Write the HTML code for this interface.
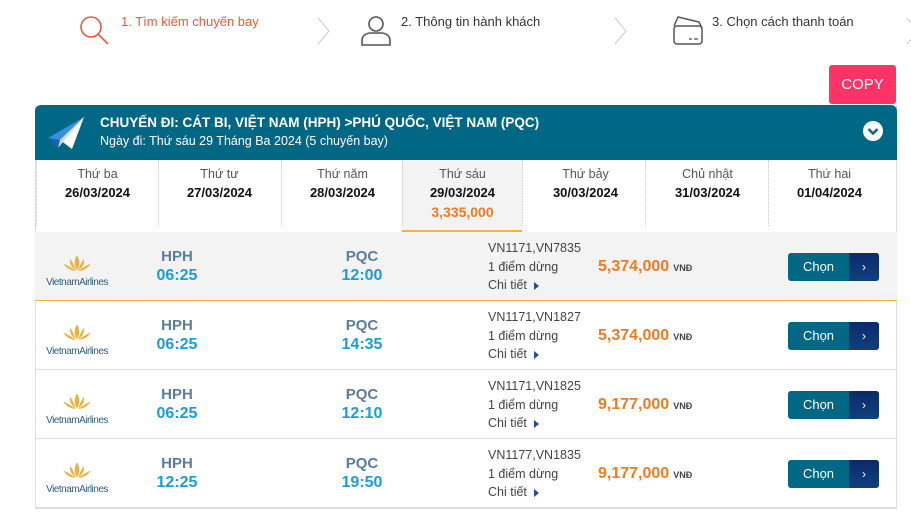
<!DOCTYPE html>
<html><head><meta charset="utf-8"><style>
*{margin:0;padding:0;box-sizing:border-box}
body{width:911px;height:523px;background:#fff;font-family:"Liberation Sans",Arial,sans-serif;position:relative;overflow:hidden;color:#333}
.a{position:absolute}
.step{font-size:13px;color:#333}
.card{left:35px;top:105px;width:862px;height:404px;border:1px solid #ddd;border-top:none}
.hdr{left:35px;top:105px;width:862px;height:55px;background:#006884;border-radius:6px 6px 0 0}
.dc{position:absolute;top:160px;width:123px;height:72px;text-align:center}
.dc .d{font-size:12.5px;color:#555;margin-top:7px}
.dc .t{font-size:13px;font-weight:bold;color:#111;margin-top:4px}
.sep{position:absolute;top:160px;height:66px;border-left:1px dotted #ccc}
.row{position:absolute;left:35px;width:862px;height:69px;border-bottom:1px solid #ddd}
.code{position:absolute;width:80px;text-align:center;font-size:15px;font-weight:bold;color:#5b7da0}
.tm{position:absolute;width:80px;text-align:center;font-size:16px;font-weight:bold;color:#1a9ce0}
.info{position:absolute;left:453px;font-size:12.5px;color:#444;line-height:18.5px}
.pr{position:absolute;left:563px;font-size:16px;font-weight:bold;color:#f47920}
.pr span{font-size:9px;color:#444;margin-left:4px}
.btn{position:absolute;left:753px;width:91px;height:28px;border-radius:3px;overflow:hidden;background:#006884}
.btn b{position:absolute;left:0;width:61px;top:6px;text-align:center;color:#fff;font-weight:normal;font-size:13px}
.btn i{position:absolute;left:61px;top:0;width:30px;height:28px;background:linear-gradient(#0b2a6a,#10407f);color:#fff;font-style:normal;text-align:center;line-height:28px;font-size:12px}
.logo{position:absolute;left:5px;width:74px;text-align:center;line-height:1}
.logo span{display:block;font-size:10px;color:#2d5f7a;letter-spacing:-0.5px;margin-top:1px}
.tri{display:inline-block;width:0;height:0;border-left:5px solid #234f8e;border-top:4.5px solid transparent;border-bottom:4.5px solid transparent;margin-left:7px;vertical-align:middle}
</style></head><body>
<svg class="a" style="left:78px;top:14px" width="34" height="32" viewBox="0 0 34 32"><circle cx="13" cy="13" r="10" fill="none" stroke="#e85a3d" stroke-width="1.6"/><line x1="20" y1="20" x2="30" y2="30" stroke="#e85a3d" stroke-width="1.6"/></svg>
<div class="a step" style="left:121px;top:14px;color:#f05a28">1. Tìm kiếm chuyến bay</div>
<svg class="a" style="left:316px;top:16px" width="16" height="30"><polyline points="2,2 13,15 2,28" fill="none" stroke="#ccc" stroke-width="1"/></svg>
<svg class="a" style="left:360px;top:14px" width="32" height="32" viewBox="0 0 32 32"><circle cx="16" cy="10" r="7" fill="none" stroke="#555" stroke-width="1.6"/><path d="M2 31 V27 Q2 20 10 19 H22 Q30 20 30 27 V31 Z" fill="none" stroke="#555" stroke-width="1.6"/></svg>
<div class="a step" style="left:401px;top:14px">2. Thông tin hành khách</div>
<svg class="a" style="left:613px;top:16px" width="16" height="30"><polyline points="2,2 13,15 2,28" fill="none" stroke="#ccc" stroke-width="1"/></svg>
<svg class="a" style="left:672px;top:14px" width="32" height="32" viewBox="0 0 32 32"><path d="M2 12 L6 3 L27 8 L30 14" fill="none" stroke="#555" stroke-width="1.5"/><rect x="2" y="12" width="28" height="18" rx="3" fill="#fff" stroke="#555" stroke-width="1.5"/><line x1="17" y1="25" x2="20" y2="25" stroke="#555" stroke-width="1.3"/><line x1="22" y1="25" x2="26" y2="25" stroke="#555" stroke-width="1.3"/></svg>
<div class="a step" style="left:712px;top:14px">3. Chọn cách thanh toán</div>
<svg class="a" style="left:905px;top:16px" width="10" height="30"><polyline points="2,2 13,15 2,28" fill="none" stroke="#ccc" stroke-width="1"/></svg>
<div class="a" style="left:829px;top:65px;width:67px;height:39px;background:#ff3366;border-radius:3px;color:#fff;font-size:15px;text-align:center;line-height:39px">COPY</div>

<div class="a card"></div>
<div class="a hdr"></div>
<svg class="a" style="left:46px;top:116px" width="40" height="34" viewBox="0 0 40 34"><polygon points="38,1 2,22 14,24" fill="#3a8ee0"/><polygon points="38,1 14,24 26,33" fill="#fff"/><polygon points="38,1 14,24 12,32" fill="#cde"/><polygon points="2,22 14,24 12,32" fill="#1d63b5"/></svg>
<div class="a" style="left:100px;top:115px;color:#fff;font-size:13.5px;font-weight:bold">CHUYẾN ĐI: CÁT BI, VIỆT NAM (HPH) &gt;PHÚ QUỐC, VIỆT NAM (PQC)</div>
<div class="a" style="left:100px;top:134px;color:#fff;font-size:12.5px">Ngày đi: Thứ sáu 29 Tháng Ba 2024 (5 chuyến bay)</div>
<svg class="a" style="left:862px;top:120px" width="22" height="22"><circle cx="11" cy="11" r="10" fill="#fff"/><polyline points="6.5,9 11,13.5 15.5,9" fill="none" stroke="#006884" stroke-width="2.4"/></svg>

<div class="a" style="left:402px;top:160px;width:120px;height:72px;background:#f3f3f3;border-bottom:2px solid #f0b43c"></div>
<div class="dc" style="left:36px"><div class="d">Thứ ba</div><div class="t">26/03/2024</div></div>
<div class="dc" style="left:158px"><div class="d">Thứ tư</div><div class="t">27/03/2024</div></div>
<div class="dc" style="left:281px"><div class="d">Thứ năm</div><div class="t">28/03/2024</div></div>
<div class="dc" style="left:401px"><div class="d">Thứ sáu</div><div class="t">29/03/2024</div><div style="color:#f47920;font-weight:bold;font-size:14px;margin-top:4px">3,335,000</div></div>
<div class="dc" style="left:524px"><div class="d">Thứ bảy</div><div class="t">30/03/2024</div></div>
<div class="dc" style="left:646px"><div class="d">Chủ nhật</div><div class="t">31/03/2024</div></div>
<div class="dc" style="left:768px"><div class="d">Thứ hai</div><div class="t">01/04/2024</div></div>
<div class="sep" style="left:36px"></div><div class="sep" style="left:158px"></div><div class="sep" style="left:281px"></div><div class="sep" style="left:402px"></div><div class="sep" style="left:522px"></div><div class="sep" style="left:645px"></div><div class="sep" style="left:768px"></div>
<div class="a" style="left:35px;top:232px;width:862px;border-top:1px solid #ddd"></div>

<div class="row" style="top:232px;background:#f3f3f3;border-bottom:1px solid #f0b43c">
<div class="logo" style="top:22px"><svg width="30" height="19" viewBox="0 0 26 14"><path d="M13 0 Q9 6 13 13 Q17 6 13 0Z M7 3 Q6 9 12 13 Q10 7 7 3Z M19 3 Q20 9 14 13 Q16 7 19 3Z M1 7 Q5 13 12 13.5 Q6 9 1 7Z M25 7 Q21 13 14 13.5 Q20 9 25 7Z" fill="#e9b23c"/></svg><span>VietnamAirlines</span></div>
<div class="code" style="left:102px;top:16px">HPH</div><div class="tm" style="left:102px;top:35px">06:25</div>
<div class="code" style="left:287px;top:16px">PQC</div><div class="tm" style="left:287px;top:35px">12:00</div>
<div class="info" style="top:7px">VN1171,VN7835<br>1 điểm dừng<br>Chi tiết<span class="tri"></span></div>
<div class="pr" style="top:26px">5,374,000<span>VNĐ</span></div>
<div class="btn" style="top:21px"><b>Chọn</b><i>›</i></div>
</div>
<div class="row" style="top:301px">
<div class="logo" style="top:22px"><svg width="30" height="19" viewBox="0 0 26 14"><path d="M13 0 Q9 6 13 13 Q17 6 13 0Z M7 3 Q6 9 12 13 Q10 7 7 3Z M19 3 Q20 9 14 13 Q16 7 19 3Z M1 7 Q5 13 12 13.5 Q6 9 1 7Z M25 7 Q21 13 14 13.5 Q20 9 25 7Z" fill="#e9b23c"/></svg><span>VietnamAirlines</span></div>
<div class="code" style="left:102px;top:16px">HPH</div><div class="tm" style="left:102px;top:35px">06:25</div>
<div class="code" style="left:287px;top:16px">PQC</div><div class="tm" style="left:287px;top:35px">14:35</div>
<div class="info" style="top:7px">VN1171,VN1827<br>1 điểm dừng<br>Chi tiết<span class="tri"></span></div>
<div class="pr" style="top:26px">5,374,000<span>VNĐ</span></div>
<div class="btn" style="top:21px"><b>Chọn</b><i>›</i></div>
</div>
<div class="row" style="top:370px">
<div class="logo" style="top:22px"><svg width="30" height="19" viewBox="0 0 26 14"><path d="M13 0 Q9 6 13 13 Q17 6 13 0Z M7 3 Q6 9 12 13 Q10 7 7 3Z M19 3 Q20 9 14 13 Q16 7 19 3Z M1 7 Q5 13 12 13.5 Q6 9 1 7Z M25 7 Q21 13 14 13.5 Q20 9 25 7Z" fill="#e9b23c"/></svg><span>VietnamAirlines</span></div>
<div class="code" style="left:102px;top:16px">HPH</div><div class="tm" style="left:102px;top:35px">06:25</div>
<div class="code" style="left:287px;top:16px">PQC</div><div class="tm" style="left:287px;top:35px">12:10</div>
<div class="info" style="top:7px">VN1171,VN1825<br>1 điểm dừng<br>Chi tiết<span class="tri"></span></div>
<div class="pr" style="top:26px">9,177,000<span>VNĐ</span></div>
<div class="btn" style="top:21px"><b>Chọn</b><i>›</i></div>
</div>
<div class="row" style="top:439px">
<div class="logo" style="top:22px"><svg width="30" height="19" viewBox="0 0 26 14"><path d="M13 0 Q9 6 13 13 Q17 6 13 0Z M7 3 Q6 9 12 13 Q10 7 7 3Z M19 3 Q20 9 14 13 Q16 7 19 3Z M1 7 Q5 13 12 13.5 Q6 9 1 7Z M25 7 Q21 13 14 13.5 Q20 9 25 7Z" fill="#e9b23c"/></svg><span>VietnamAirlines</span></div>
<div class="code" style="left:102px;top:16px">HPH</div><div class="tm" style="left:102px;top:35px">12:25</div>
<div class="code" style="left:287px;top:16px">PQC</div><div class="tm" style="left:287px;top:35px">19:50</div>
<div class="info" style="top:7px">VN1177,VN1835<br>1 điểm dừng<br>Chi tiết<span class="tri"></span></div>
<div class="pr" style="top:26px">9,177,000<span>VNĐ</span></div>
<div class="btn" style="top:21px"><b>Chọn</b><i>›</i></div>
</div>
</body></html>
